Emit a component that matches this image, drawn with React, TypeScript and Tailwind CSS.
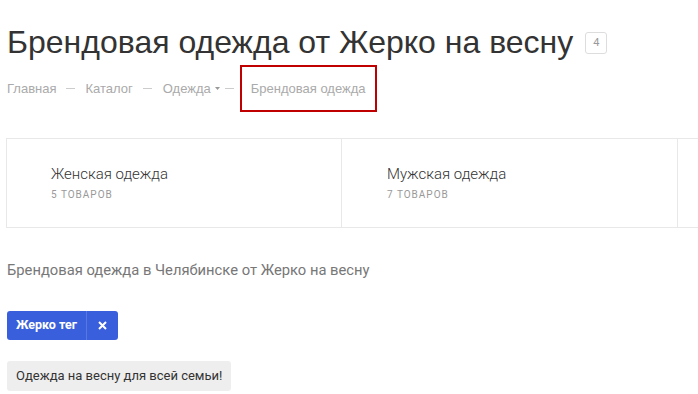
import React from "react";

export default function App() {
  return (
    <div className="w-[698px] h-[394px] overflow-hidden bg-white" style={{ fontFamily: "Roboto, 'Liberation Sans', Arial, sans-serif" }}>
      <div className="pl-[7px] pt-[22px] flex items-center">
        <h1 className="text-[32px] leading-[40px] text-[#333] font-normal" style={{ fontFamily: "'Liberation Sans', Arial, sans-serif" }}>
          Брендовая одежда от Жерко на весну
        </h1>
        <span className="ml-[12px] mt-[2px] w-[22px] h-[22px] border border-[#ddd] rounded-[3px] flex items-center justify-center text-[11px] text-[#999]">4</span>
      </div>
      <div className="pl-[7px] mt-[3px] flex items-center text-[13px] text-[#aaa]" style={{ fontFamily: "'Liberation Sans', Arial, sans-serif" }}>
        <span>Главная</span>
        <span className="w-[29px] flex justify-center"><span className="block w-[9px] h-px bg-[#ccc]"></span></span>
        <span>Каталог</span>
        <span className="w-[30px] flex justify-center"><span className="block w-[9px] h-px bg-[#ccc]"></span></span>
        <span>Одежда</span>
        <svg className="ml-[4px]" width="5" height="3" viewBox="0 0 5 3"><path d="M0 0H5L2.5 3Z" fill="#999" /></svg>
        <span className="w-[20px] flex justify-center"><span className="block w-[9px] h-px bg-[#ccc]"></span></span>
        <span className="border-2 border-[#c00000] h-[47px] w-[137px] pl-[9px] flex items-center">Брендовая одежда</span>
      </div>
      <div className="ml-[6px] mt-[26px] flex border-y border-[#e8e8e8] h-[90px]">
        <div className="w-[336px] shrink-0 border-l border-r border-[#e8e8e8] pl-[44px] pt-[25px]">
          <div className="text-[15px] leading-[20px] text-[#333] font-light">Женская одежда</div>
          <div className="mt-[3px] text-[10px] tracking-[1px] text-[#999]">5 ТОВАРОВ</div>
        </div>
        <div className="w-[336px] shrink-0 border-r border-[#e8e8e8] pl-[45px] pt-[25px]">
          <div className="text-[15px] leading-[20px] text-[#333] font-light">Мужская одежда</div>
          <div className="mt-[3px] text-[10px] tracking-[1px] text-[#999]">7 ТОВАРОВ</div>
        </div>
        <div className="flex-1"></div>
      </div>
      <div className="pl-[7px] mt-[32px] text-[14.75px] leading-[20px] text-[#777]">
        Брендовая одежда в Челябинске от Жерко на весну
      </div>
      <div className="pl-[7px] mt-[31px] flex">
        <div className="flex h-[29px] rounded-[3px] bg-[#3a5fdc] text-white text-[12.5px] font-bold">
          <span className="px-[9px] flex items-center border-r border-[#5777e2]">Жерко тег</span>
          <span className="w-[31px] flex items-center justify-center">
            <svg width="9" height="9" viewBox="0 0 9 9"><path d="M1 1L8 8M8 1L1 8" stroke="white" strokeWidth="2" /></svg>
          </span>
        </div>
      </div>
      <div className="pl-[7px] mt-[21px] flex">
        <div className="h-[30px] px-[9px] flex items-center bg-[#eeeeee] rounded-[3px] text-[13px] text-[#333]">
          Одежда на весну для всей семьи!
        </div>
      </div>
    </div>
  );
}
